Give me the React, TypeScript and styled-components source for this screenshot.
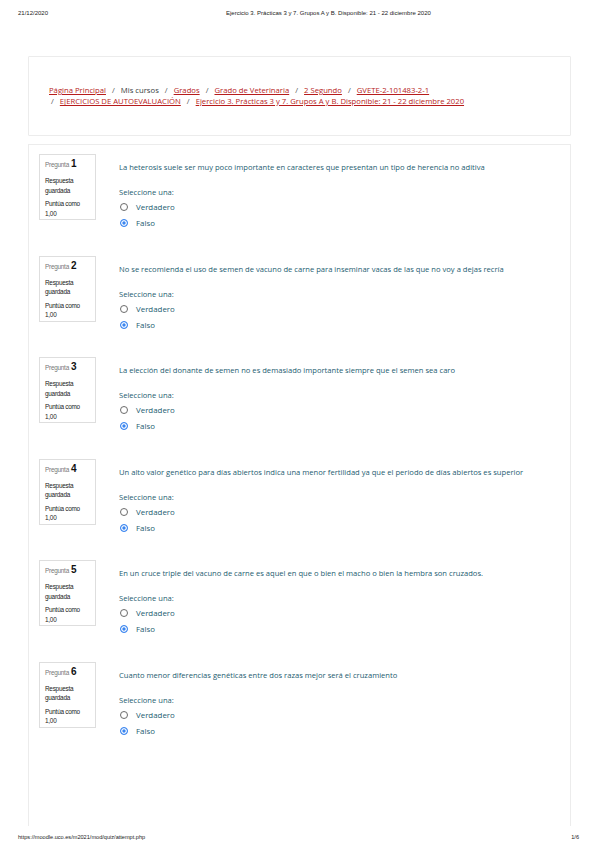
import React from "react";
import styled, { createGlobalStyle } from "styled-components";

const GlobalStyle = createGlobalStyle`
  html, body {
    margin: 0;
    padding: 0;
    background: #ffffff;
  }
  body {
    width: 600px;
    height: 848px;
    overflow: hidden;
    font-family: "Open Sans", "Liberation Sans", sans-serif;
  }
`;

const questions = [
  "La heterosis suele ser muy poco importante en caracteres que presentan un tipo de herencia no aditiva",
  "No se recomienda el uso de semen de vacuno de carne para inseminar vacas de las que no voy a dejas recría",
  "La elección del donante de semen no es demasiado importante siempre que el semen sea caro",
  "Un alto valor genético para días abiertos indica una menor fertilidad ya que el periodo de días abiertos es superior",
  "En un cruce triple del vacuno de carne es aquel en que o bien el macho o bien la hembra son cruzados.",
  "Cuanto menor diferencias genéticas entre dos razas mejor será el cruzamiento",
];

const crumbs: { label: string; link: boolean }[] = [
  { label: "Página Principal", link: true },
  { label: "Mis cursos", link: false },
  { label: "Grados", link: true },
  { label: "Grado de Veterinaria", link: true },
  { label: "2 Segundo", link: true },
  { label: "GVETE-2-101483-2-1", link: true },
  { label: "EJERCICIOS DE AUTOEVALUACIÓN", link: true },
  { label: "Ejercicio 3. Prácticas 3 y 7. Grupos A y B. Disponible: 21 -  22 diciembre 2020", link: true },
];

const Page = styled.div`
  width: 600px;
  height: 848px;
  display: flex;
  flex-direction: column;
`;

const PrintBar = styled.div`
  display: flex;
  align-items: center;
  height: 26px;
  padding: 0 18px;
  font-family: "Liberation Sans", Arial, sans-serif;
  font-size: 6px;
  color: #222;
`;

const PrintTitle = styled.span`
  margin-left: 178px;
`;

const Content = styled.div`
  flex: 1;
  display: flex;
  flex-direction: column;
  gap: 8px;
  padding: 30px 29px 0 28px;
`;

const Card = styled.div`
  border: 1.5px solid #ececec;
  border-radius: 1px;
  height: 80px;
  display: flex;
  align-items: center;
  padding: 0 20px;
  box-sizing: border-box;
`;

const Crumbs = styled.div`
  font-size: 7.7px;
  line-height: 11px;
  color: #373a3c;
`;

const Crumb = styled.span<{ $link: boolean }>`
  color: ${(p) => (p.$link ? "#b71c1c" : "#373a3c")};
  text-decoration: ${(p) => (p.$link ? "underline" : "none")};
  text-underline-offset: 1px;
`;

const Sep = styled.span<{ $lead?: boolean }>`
  color: #555;
  margin: ${(p) => (p.$lead ? "0 6px 0 2px" : "0 6px")};
`;

const Panel = styled.div`
  flex: 1;
  border: 1.5px solid #ececec;
  border-bottom: none;
  padding: 9px 0 0 10px;
  box-sizing: border-box;
`;

const Question = styled.div`
  display: flex;
  height: 101.6px;
`;

const Info = styled.div`
  width: 57px;
  height: 66px;
  flex-shrink: 0;
  border: 1px solid #dedede;
  box-sizing: border-box;
  padding: 3px 5px;
  font-family: "Liberation Sans", Arial, sans-serif;
  font-size: 6.4px;
  line-height: 9.5px;
  color: #222;
  letter-spacing: -0.25px;
`;

const InfoNo = styled.div`
  color: #777;
  margin-bottom: 5px;
  line-height: 12px;
  span {
    color: #111;
    font-size: 10px;
    font-weight: bold;
    letter-spacing: 0;
    margin-left: 2px;
  }
`;

const InfoLine = styled.div`
  margin-bottom: 4px;
`;

const Body = styled.div`
  margin-left: 23px;
  padding-top: 8px;
  color: #1c5c70;
  font-size: 7.6px;
`;

const QText = styled.div`
  line-height: 11px;
  margin-bottom: 14px;
`;

const Prompt = styled.div`
  line-height: 10px;
  margin-bottom: 2px;
`;

const Option = styled.div`
  display: flex;
  align-items: center;
  height: 16px;
  gap: 8px;
  font-size: 7.9px;
`;

const Radio = styled.span<{ $on: boolean }>`
  width: 8px;
  height: 8px;
  border-radius: 50%;
  box-sizing: border-box;
  border: 1px solid ${(p) => (p.$on ? "#3b86f0" : "#6b6b6b")};
  background: ${(p) => (p.$on ? "#3b86f0" : "#fff")};
  box-shadow: ${(p) => (p.$on ? "inset 0 0 0 1.3px #ffffff" : "none")};
  margin-left: 1px;
`;

const Footer = styled.div`
  display: flex;
  justify-content: space-between;
  align-items: center;
  height: 22px;
  padding: 0 21px 0 18px;
  font-family: "Liberation Sans", Arial, sans-serif;
  font-size: 5.6px;
  color: #222;
`;

export default function App() {
  return (
    <>
      <GlobalStyle />
      <Page>
        <PrintBar>
          <span>21/12/2020</span>
          <PrintTitle>
            Ejercicio 3. Prácticas 3 y 7. Grupos A y B. Disponible: 21 - 22 diciembre 2020
          </PrintTitle>
        </PrintBar>
        <Content>
          <Card>
            <Crumbs>
              {crumbs.map((c, i) => (
                <React.Fragment key={i}>
                  {i === 6 ? (
                    <>
                      <br />
                      <Sep $lead>/</Sep>
                    </>
                  ) : (
                    i > 0 && <Sep>/</Sep>
                  )}
                  <Crumb $link={c.link}>{c.label}</Crumb>
                </React.Fragment>
              ))}
            </Crumbs>
          </Card>
          <Panel>
            {questions.map((q, i) => (
              <Question key={i}>
                <Info>
                  <InfoNo>
                    Pregunta<span>{i + 1}</span>
                  </InfoNo>
                  <InfoLine>
                    Respuesta
                    <br />
                    guardada
                  </InfoLine>
                  <InfoLine>
                    Puntúa como
                    <br />
                    1,00
                  </InfoLine>
                </Info>
                <Body>
                  <QText>{q}</QText>
                  <Prompt>Seleccione una:</Prompt>
                  <Option>
                    <Radio $on={false} />
                    Verdadero
                  </Option>
                  <Option>
                    <Radio $on={true} />
                    Falso
                  </Option>
                </Body>
              </Question>
            ))}
          </Panel>
        </Content>
        <Footer>
          <span>https://moodle.uco.es/m2021/mod/quiz/attempt.php</span>
          <span>1/6</span>
        </Footer>
      </Page>
    </>
  );
}
